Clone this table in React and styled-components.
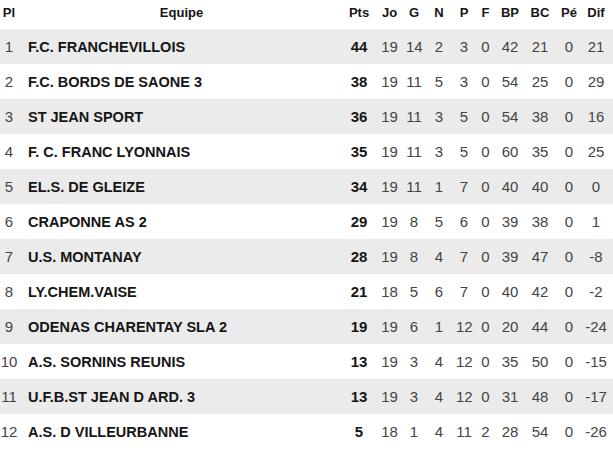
import React from "react";
import styled, { createGlobalStyle } from "styled-components";

const rows = [
  [1, "F.C. FRANCHEVILLOIS", 44, 19, 14, 2, 3, 0, 42, 21, 0, 21],
  [2, "F.C. BORDS DE SAONE 3", 38, 19, 11, 5, 3, 0, 54, 25, 0, 29],
  [3, "ST JEAN SPORT", 36, 19, 11, 3, 5, 0, 54, 38, 0, 16],
  [4, "F. C. FRANC LYONNAIS", 35, 19, 11, 3, 5, 0, 60, 35, 0, 25],
  [5, "EL.S. DE GLEIZE", 34, 19, 11, 1, 7, 0, 40, 40, 0, 0],
  [6, "CRAPONNE AS 2", 29, 19, 8, 5, 6, 0, 39, 38, 0, 1],
  [7, "U.S. MONTANAY", 28, 19, 8, 4, 7, 0, 39, 47, 0, -8],
  [8, "LY.CHEM.VAISE", 21, 18, 5, 6, 7, 0, 40, 42, 0, -2],
  [9, "ODENAS CHARENTAY SLA 2", 19, 19, 6, 1, 12, 0, 20, 44, 0, -24],
  [10, "A.S. SORNINS REUNIS", 13, 19, 3, 4, 12, 0, 35, 50, 0, -15],
  [11, "U.F.B.ST JEAN D ARD. 3", 13, 19, 3, 4, 12, 0, 31, 48, 0, -17],
  [12, "A.S. D VILLEURBANNE", 5, 18, 1, 4, 11, 2, 28, 54, 0, -26],
];

const heads = ["Pts", "Jo", "G", "N", "P", "F", "BP", "BC", "Pé", "Dif"];

const GlobalStyle = createGlobalStyle`
  body {
    margin: 0;
    background: #fff;
    font-family: Arial, "Liberation Sans", sans-serif;
  }
`;

const Table = styled.div`
  width: 613px;
  display: flex;
  flex-direction: column;
`;

const Row = styled.div`
  display: grid;
  grid-template-columns: 18px 327px 28px 33px 16px 34px 16px 27px 22px 38px 20px 34px;
  align-items: center;
  height: ${(p) => (p.$head ? "29px" : "35px")};
  background: ${(p) => (p.$shade ? "#ebebeb" : "#fff")};
`;

const HeadCell = styled.div`
  font-size: 13px;
  font-weight: bold;
  color: #151515;
  text-align: center;
  white-space: nowrap;
  padding-bottom: 4px;
`;

const Num = styled.div`
  font-size: 15px;
  color: ${(p) => (p.$bold ? "#151515" : "#444")};
  font-weight: ${(p) => (p.$bold ? "bold" : "normal")};
  text-align: center;
  white-space: nowrap;
`;

const Team = styled.div`
  font-size: 14.5px;
  font-weight: bold;
  color: #151515;
  padding-left: 10px;
  white-space: nowrap;
`;

export default function App() {
  return (
    <>
      <GlobalStyle />
      <Table>
        <Row $head>
          <HeadCell>Pl</HeadCell>
          <HeadCell>Equipe</HeadCell>
          {heads.map((h) => (
            <HeadCell key={h}>{h}</HeadCell>
          ))}
        </Row>
        {rows.map((r, i) => (
          <Row key={r[0]} $shade={i % 2 === 0}>
            <Num>{r[0]}</Num>
            <Team>{r[1]}</Team>
            {r.slice(2).map((v, j) => (
              <Num key={j} $bold={j === 0}>
                {v}
              </Num>
            ))}
          </Row>
        ))}
      </Table>
    </>
  );
}
